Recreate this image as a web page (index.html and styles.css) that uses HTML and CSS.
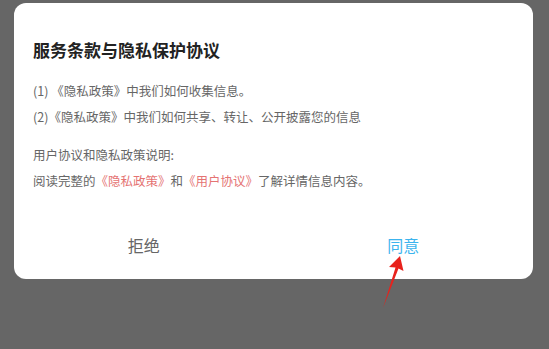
FILE: index.html
```html
<!DOCTYPE html>
<html lang="zh-CN">
<head>
<meta charset="utf-8">
<title>服务条款与隐私保护协议</title>
<link rel="stylesheet" href="styles.css">
</head>
<body>
<div class="dialog">
  <div class="content">
    <h1 class="title">服务条款与隐私保护协议</h1>
    <div class="group">
      <p class="line">(1) 《隐私政策》中我们如何收集信息。</p>
      <p class="line">(2)《隐私政策》中我们如何共享、转让、公开披露您的信息</p>
    </div>
    <div class="group group-2">
      <p class="line">用户协议和隐私政策说明:</p>
      <p class="line">阅读完整的<span class="link">《隐私政策》</span>和<span class="link">《用户协议》</span>了解详情信息内容。</p>
    </div>
  </div>
  <div class="actions">
    <div class="btn btn-reject">拒绝</div>
    <div class="btn btn-agree">同意</div>
  </div>
</div>
<svg class="arrow" width="549" height="349" viewBox="0 0 549 349">
  <polygon points="400,256 403.5,271 398.5,268.5 383,308 395.5,267.5 389,267" fill="#e8221c"/>
</svg>
</body>
</html>
```

FILE: styles.css
```css
html, body {
  margin: 0;
  padding: 0;
}
body {
  background: #666666;
  width: 549px;
  height: 349px;
  overflow: hidden;
  position: relative;
  font-family: "Noto Sans CJK SC", "Noto Sans", sans-serif;
}
.dialog {
  margin: 3px 0 0 14px;
  width: 519px;
  background: #ffffff;
  border-radius: 12px;
  padding-bottom: 4px;
}
.content {
  padding: 35px 19px 0;
}
.title {
  margin: 0;
  font-size: 17px;
  line-height: 24px;
  font-weight: bold;
  color: #222222;
}
.group {
  margin-top: 16px;
}
.group-2 {
  margin-top: 12px;
}
.line {
  margin: 0;
  font-size: 12.5px;
  line-height: 26px;
  color: #666666;
  white-space: nowrap;
}
.link {
  color: #e57373;
}
.actions {
  display: flex;
  margin-top: 21px;
}
.btn {
  flex: 1;
  text-align: center;
  font-size: 16px;
  line-height: 60px;
}
.btn-reject {
  color: #666666;
}
.btn-agree {
  color: #3cb4ee;
}
.arrow {
  position: absolute;
  left: 0;
  top: 0;
}
```
